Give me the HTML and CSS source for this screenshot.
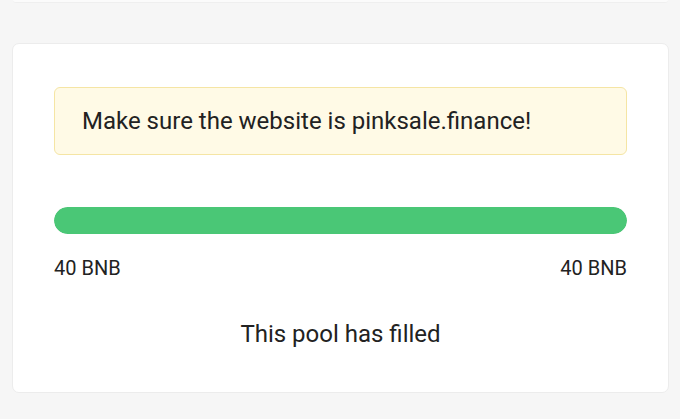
FILE: index.html
```html
<!DOCTYPE html>
<html lang="en">
<head>
<meta charset="utf-8">
<link rel="stylesheet" href="styles.css">
</head>
<body>
<div class="page">
  <div class="prev-card"></div>
  <div class="card">
    <div class="alert">Make sure the website is pinksale.finance!</div>
    <div class="progress"><div class="progress-fill" style="width:100%"></div></div>
    <div class="range">
      <span>40 BNB</span>
      <span>40 BNB</span>
    </div>
    <div class="status">This pool has filled</div>
  </div>
</div>
</body>
</html>
```
FILE: styles.css
```css
html, body {
  margin: 0;
  padding: 0;
  background: #f6f6f6;
  font-family: Roboto, "Noto Sans", Arial, sans-serif;
  color: #222;
}
.page {
  padding: 0 11px 0 12px;
  display: flex;
  flex-direction: column;
}
.prev-card {
  height: 2px;
  margin: 0 1px;
  background: #fbfbfb;
  border-bottom: 1px solid #efefef;
  border-radius: 0 0 6px 6px;
}
.card {
  margin-top: 40px;
  background: #fff;
  border: 1px solid #ececec;
  border-radius: 7px;
  padding: 43px 41px 0;
  height: 350px;
  box-sizing: border-box;
  display: flex;
  flex-direction: column;
}
.alert {
  height: 68px;
  box-sizing: border-box;
  background: #fffae6;
  border: 1px solid #f5e5a4;
  border-radius: 6px;
  padding: 0 27px;
  display: flex;
  align-items: center;
  font-size: 24px;
}
.progress {
  margin-top: 52px;
  height: 27px;
  border-radius: 14px;
  background: #eee;
  overflow: hidden;
}
.progress-fill {
  height: 100%;
  background: #4ac776;
  border-radius: 14px;
}
.range {
  display: flex;
  justify-content: space-between;
  margin-top: 22px;
  font-size: 20px;
  line-height: 24px;
}
.status {
  margin-top: 40px;
  text-align: center;
  font-size: 24px;
  line-height: 28px;
}
```
